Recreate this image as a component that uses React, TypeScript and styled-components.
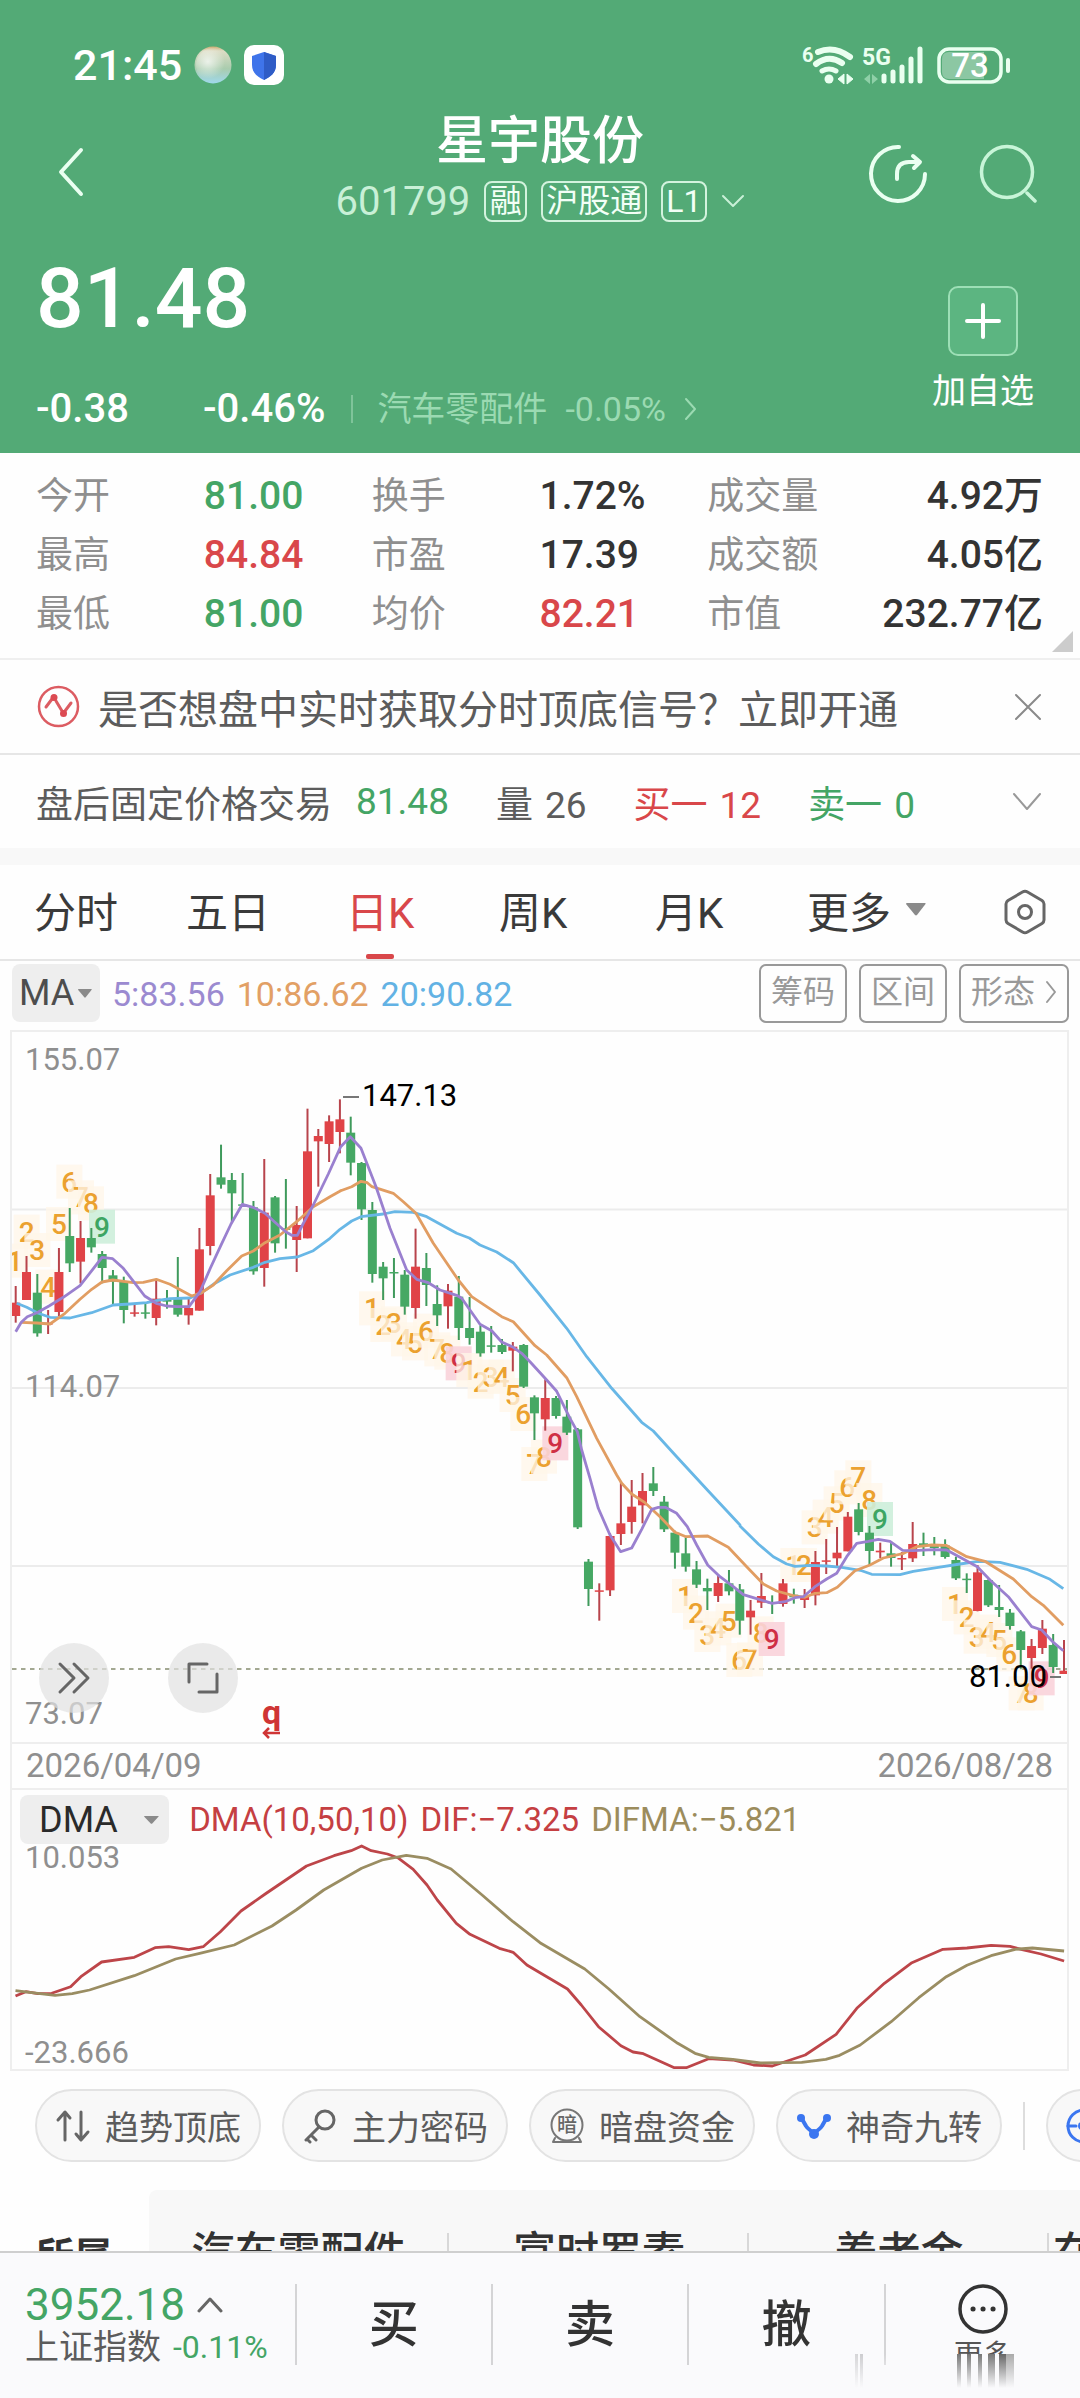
import React from "react";
import styled, { createGlobalStyle } from "styled-components";

const C = {
  green: "#53aa76",
  up: "#d9474a",
  down: "#44a565",
  ink: "#333333",
  text: "#5c5c5c",
  mute: "#8f8f8f",
  line: "#e6e6e6",
};

const Global = createGlobalStyle`
  * { box-sizing: border-box; }
  body { margin: 0; background: #fefefe; }
  body, button, select { font-family: Roboto, "Noto Sans CJK SC", sans-serif; }
  button, select { border: 0; padding: 0; margin: 0; background: none; color: inherit; cursor: pointer; }
  svg { display: block; flex: none; }
`;

const Page = styled.div`
  min-height: 100vh;
  overflow: hidden;
  color: ${C.ink};
  background: #fefefe;
`;

/* ---------- header ---------- */

const Header = styled.header`
  background: ${C.green};
  color: #fff;
  padding-top: 40px;
`;

const StatusBar = styled.div`
  display: flex;
  justify-content: space-between;
  align-items: center;
  height: 50px;
  padding: 0 70px 0 73px;
`;

const StatusGroup = styled.div`
  display: flex;
  align-items: center;
  gap: 12px;
`;

const Clock = styled.time`
  font-size: 43px;
  line-height: 50px;
  font-weight: 500;
`;

const TitleBar = styled.div`
  display: grid;
  grid-template-columns: 1fr auto 1fr;
  align-items: center;
  min-height: 132px;
  margin-top: 18px;
  padding: 0 43px;
`;

const IconButton = styled.button`
  display: inline-flex;
  align-items: center;
  justify-content: center;
`;

const BackSlot = styled.div`
  padding-left: 13px;
`;

const TitleActions = styled.div`
  display: flex;
  justify-content: flex-end;
  gap: 50px;
`;

const TitleBlock = styled.div`
  align-self: start;
  display: flex;
  flex-direction: column;
  align-items: center;
`;

const StockName = styled.h1`
  margin: 0;
  font-size: 52px;
  line-height: 68px;
  font-weight: 500;
`;

const StockMeta = styled.div`
  display: flex;
  align-items: center;
  gap: 14px;
  height: 50px;
  font-size: 40px;
  color: #c9f0d7;
`;

const Badge = styled.span`
  display: inline-flex;
  align-items: center;
  justify-content: center;
  min-width: 43px;
  height: 41px;
  padding: 0 3px;
  border: 2px solid #d3f3de;
  border-radius: 8px;
  color: #f2fff6;
  font-size: 32px;
  line-height: 36px;
`;

const Quote = styled.section`
  display: flex;
  justify-content: space-between;
  padding: 14px 46px 22px 36px;
`;

const Price = styled.div`
  font-size: 84px;
  line-height: 90px;
  font-weight: 500;
`;

const ChangeRow = styled.div`
  display: flex;
  align-items: center;
  margin-top: 43px;
  height: 44px;
  font-size: 40px;
  line-height: 44px;
  font-weight: 500;
`;

const Change = styled.span`
  width: 167px;
`;

const Sector = styled.a`
  display: flex;
  align-items: center;
  gap: 18px;
  margin-left: 26px;
  padding-left: 24px;
  color: #9bdab2;
  font-size: 34px;
  line-height: 28px;
  font-weight: 400;
  border-left: 2px solid #7fc49a;
  text-decoration: none;
`;

const AddButton = styled.button`
  display: flex;
  flex-direction: column;
  align-items: center;
  align-self: flex-start;
  gap: 12px;
  margin-top: 32px;
  font-size: 34px;
  line-height: 46px;
`;

const PlusBox = styled.span`
  display: flex;
  align-items: center;
  justify-content: center;
  width: 70px;
  height: 70px;
  border: 2px solid #9ddfb6;
  border-radius: 10px;
  background: #5cb581;
`;

/* ---------- key figures ---------- */

const Stats = styled.dl`
  position: relative;
  display: grid;
  grid-template-columns: repeat(3, 1fr);
  margin: 0;
  padding: 14px 37px 14px 36px;
  border-bottom: 2px solid #efefef;
`;

const Stat = styled.div<{ $end?: boolean }>`
  display: ${(p) => (p.$end ? "flex" : "grid")};
  grid-template-columns: 1fr 1fr;
  justify-content: space-between;
  height: 59px;
  line-height: 59px;
`;

const StatLabel = styled.dt`
  font-size: 37px;
  color: ${C.mute};
`;

const StatValue = styled.dd<{ $color?: string }>`
  margin: 0;
  font-size: 39px;
  font-weight: 500;
  white-space: nowrap;
  color: ${(p) => p.$color ?? C.ink};
`;

const Corner = styled.span`
  position: absolute;
  right: 7px;
  bottom: 6px;
  border-style: solid;
  border-width: 0 0 21px 21px;
  border-color: transparent transparent #cccccc transparent;
`;

/* ---------- notice rows ---------- */

const Notice = styled.div`
  display: flex;
  align-items: center;
  justify-content: space-between;
  min-height: 95px;
  padding: 0 38px 0 37px;
  border-bottom: 2px solid ${C.line};
  color: ${C.text};
  font-size: 40px;
`;

const NoticeLink = styled.a`
  display: flex;
  align-items: center;
  gap: 18px;
  color: inherit;
  text-decoration: none;
`;

const AfterHours = styled.div`
  display: flex;
  align-items: center;
  min-height: 93px;
  padding: 0 38px 0 36px;
  font-size: 37px;
  color: ${C.text};
`;

const Pair = styled.span<{ $color?: string; $gap?: number }>`
  display: flex;
  align-items: baseline;
  gap: 12px;
  margin-right: ${(p) => p.$gap ?? 47}px;
  color: ${(p) => p.$color ?? C.text};
`;

const Spacer = styled.span`
  flex: 1;
`;

const Band = styled.div`
  height: 17px;
  background: #f8f8f8;
`;

/* ---------- period tabs ---------- */

const Tabs = styled.nav`
  display: grid;
  grid-template-columns: 152fr 160fr 153fr 156fr 152fr 197fr 42fr;
  height: 96px;
  padding: 0 34px;
  border-bottom: 2px solid ${C.line};
`;

const Tab = styled.button<{ $active?: boolean }>`
  position: relative;
  justify-self: start;
  display: flex;
  align-items: center;
  gap: 15px;
  padding-bottom: 6px;
  font-size: 42px;
  white-space: nowrap;
  color: ${(p) => (p.$active ? C.up : "#3a3a3a")};

  &::after {
    content: "";
    display: ${(p) => (p.$active ? "block" : "none")};
    position: absolute;
    left: 50%;
    bottom: 0;
    width: 28px;
    height: 5px;
    margin-left: -14px;
    border-radius: 2px;
    background: ${C.up};
  }
`;

/* ---------- chart toolbar ---------- */

const Toolbar = styled.div`
  display: flex;
  align-items: flex-start;
  gap: 12px;
  padding: 3px 11px 6px 12px;
`;

const Picker = styled.label<{ $wide?: boolean }>`
  position: relative;
  display: flex;
  align-items: center;
  width: ${(p) => (p.$wide ? 149 : 88)}px;
  height: ${(p) => (p.$wide ? 49 : 58)}px;
  border-radius: 8px;
  background: #eeeeee;

  select {
    appearance: none;
    width: 100%;
    height: 100%;
    padding-left: ${(p) => (p.$wide ? 19 : 7)}px;
    font-size: 36px;
    color: ${(p) => (p.$wide ? "#2a2a2a" : "#4d4d4d")};
  }

  svg {
    position: absolute;
    right: ${(p) => (p.$wide ? 10 : 8)}px;
    pointer-events: none;
  }
`;

const Averages = styled.div`
  display: flex;
  gap: 12px;
  font-size: 34px;
  line-height: 60px;
`;

const Tint = styled.span<{ $color: string }>`
  color: ${(p) => p.$color};
`;

const Tool = styled.button`
  display: flex;
  align-items: center;
  gap: 10px;
  height: 59px;
  padding: 0 10px;
  border: 2px solid #999;
  border-radius: 7px;
  color: #999;
  font-size: 32px;
  line-height: 50px;
  padding-bottom: 4px;
`;

/* ---------- charts ---------- */

const Frame = styled.div`
  margin: 0 11px 0 10px;
  border: 2px solid #eeeeee;
`;

const Plot = styled.div`
  position: relative;

  > svg {
    width: 100%;
    height: auto;
  }
`;

const Scale = styled.span<{ $top: string }>`
  position: absolute;
  left: 13px;
  top: ${(p) => p.$top};
  font-size: 31px;
  line-height: 36px;
  margin-top: -18px;
  color: ${C.mute};
`;

const RoundButton = styled.button<{ $left: number }>`
  position: absolute;
  left: ${(p) => p.$left}px;
  bottom: 29px;
  display: flex;
  align-items: center;
  justify-content: center;
  width: 70px;
  height: 70px;
  border-radius: 50%;
  background: rgba(225, 225, 225, 0.7);
`;

const Dates = styled.div`
  display: flex;
  justify-content: space-between;
  height: 48px;
  padding: 0 14px;
  border: solid #eeeeee;
  border-width: 2px 0;
  font-size: 33px;
  line-height: 44px;
  color: ${C.mute};
`;

const IndicatorHead = styled.div`
  display: flex;
  align-items: center;
  gap: 12px;
  padding: 5px 8px 0;
  font-size: 33px;
  line-height: 49px;
`;

/* ---------- chips and concepts ---------- */

const Chips = styled.div`
  display: flex;
  align-items: center;
  gap: 21px;
  padding: 18px 0 28px 35px;
  overflow: hidden;
`;

const Chip = styled.button`
  flex: none;
  display: flex;
  align-items: center;
  gap: 14px;
  height: 73px;
  padding: 0 18px;
  border: 2px solid #e3e3e3;
  border-radius: 37px;
  background: #f8f8f8;
  color: ${C.text};
  font-size: 34px;
`;

const ChipRule = styled.span`
  flex: none;
  width: 2px;
  height: 48px;
  background: #dddddd;
`;

const Concepts = styled.section`
  display: grid;
  grid-template-columns: 149px 1fr;
  height: 132px;
`;

const ConceptTitle = styled.h2`
  margin: 0;
  padding-left: 36px;
  font-size: 38px;
  line-height: 132px;
  font-weight: 700;
`;

const ConceptList = styled.div`
  display: flex;
  align-items: center;
  overflow: hidden;
  border-radius: 8px 0 0 0;
  background: #f8f8f8;
`;

const Concept = styled.a`
  flex: 0 0 300px;
  padding-bottom: 6px;
  text-align: center;
  font-size: 43px;
  line-height: 60px;
  font-weight: 500;
  color: ${C.ink};
  text-decoration: none;
  background: linear-gradient(#d8d8d8, #d8d8d8) right 10px / 2px 100% no-repeat;

  &:last-child {
    text-align: left;
    padding-left: 4px;
  }
`;

/* ---------- trade bar ---------- */

const TradeBar = styled.footer`
  position: fixed;
  left: 0;
  right: 0;
  bottom: 0;
  display: grid;
  grid-template-columns: 3fr 2fr 2fr 2fr 2fr;
  padding: 31px 0 33px;
  border-top: 2px solid #cfcfcf;
  background: #fafafc;
`;

const IndexCell = styled.button`
  padding-left: 25px;
  text-align: left;
  height: 81px;
`;

const IndexLine = styled.span<{ $size: number }>`
  display: flex;
  align-items: center;
  gap: 12px;
  height: 42px;
  font-size: ${(p) => p.$size}px;
  line-height: 42px;
  color: ${C.text};
`;

const IndexChange = styled.span`
  color: ${C.down};
  font-size: 32px;
`;

const TradeCell = styled.button`
  display: flex;
  flex-direction: column;
  align-items: center;
  justify-content: center;
  height: 81px;
  border-left: 2px solid #d4d4d6;
  font-size: 50px;
  line-height: 74px;
  font-weight: 500;
`;

const MoreCell = styled(TradeCell)`
  justify-content: flex-start;
  color: #555;
  font-size: 29px;
  font-weight: 400;
`;

const MoreText = styled.span`
  height: 24px;
  margin-top: 0;
  line-height: 44px;
  overflow: hidden;
`;

const Smear = styled.svg`
  position: absolute;
  right: 5px;
  top: 101px;
  pointer-events: none;
`;

/* ---------- data ---------- */

type Candle = [up: 0 | 1, high: number, top: number, bottom: number, low: number];

// Values are stored in thirds of a chart unit, relative to the base of each block.
const BLOCKS: { base: number; rows: Candle[] }[] = [
  {
    base: 1020,
    rows: [
      [1, 798, 848, 888, 908], [1, 708, 756, 840, 840], [0, 762, 818, 940, 950], [1, 870, 908, 914, 942],
      [1, 684, 756, 876, 888], [0, 564, 648, 730, 756], [1, 603, 654, 725, 790], [0, 624, 654, 682, 698],
      [0, 693, 702, 744, 790], [0, 750, 766, 785, 852], [0, 770, 786, 870, 910], [1, 850, 877, 881, 890],
      [0, 850, 877, 881, 896], [1, 778, 836, 894, 916], [0, 810, 840, 845, 866], [0, 711, 836, 884, 890],
      [1, 836, 864, 886, 914], [1, 624, 688, 872, 872], [1, 462, 526, 678, 706], [0, 374, 472, 494, 506],
      [0, 459, 480, 520, 606], [0, 459, 553, 557, 560], [0, 543, 562, 754, 764], [1, 417, 578, 744, 800],
      [0, 528, 532, 670, 698], [0, 477, 625, 629, 686], [1, 558, 615, 660, 756], [1, 266, 394, 655, 655],
      [1, 327, 348, 364, 500], [1, 286, 304, 372, 426], [1, 238, 298, 336, 400], [0, 290, 338, 428, 466],
    ],
  },
  {
    base: 1060,
    rows: [
      [0, 306, 309, 448, 480], [0, 426, 450, 642, 668], [0, 606, 620, 655, 720], [0, 594, 636, 640, 714],
      [0, 630, 644, 740, 764], [1, 506, 620, 744, 776], [0, 579, 624, 675, 738], [0, 676, 732, 766, 798],
      [1, 672, 692, 739, 806], [0, 648, 710, 804, 840], [0, 711, 804, 834, 854], [0, 796, 815, 880, 890],
      [0, 798, 856, 860, 878], [0, 837, 855, 876, 882], [1, 846, 860, 872, 934], [0, 852, 855, 980, 984],
      [0, 1006, 1012, 1060, 1140], [1, 958, 1014, 1078, 1112], [0, 1008, 1014, 1068, 1076],
      [0, 1020, 1070, 1118, 1125],
    ],
  },
  {
    base: 1300,
    rows: [
      [0, 384, 388, 682, 687], [0, 777, 785, 867, 918], [1, 850, 871, 875, 962], [1, 700, 708, 871, 888],
      [1, 546, 670, 702, 735], [1, 540, 620, 666, 701], [1, 519, 573, 616, 670], [0, 501, 550, 573, 588],
      [0, 588, 605, 688, 696], [0, 692, 698, 758, 806], [0, 712, 760, 800, 815], [0, 783, 808, 854, 864],
      [0, 836, 864, 874, 930], [1, 824, 849, 888, 906], [0, 810, 850, 874, 886], [0, 852, 868, 962, 1004],
      [1, 900, 932, 952, 1004], [1, 819, 888, 908, 924], [0, 886, 906, 910, 942], [1, 837, 850, 912, 920],
      [0, 866, 884, 892, 911], [1, 867, 890, 900, 924],
    ],
  },
  {
    base: 1400,
    rows: [
      [1, 453, 486, 586, 616], [1, 417, 481, 485, 522], [1, 381, 458, 475, 500], [1, 336, 350, 454, 454],
      [0, 309, 328, 396, 406], [0, 378, 398, 453, 496], [1, 428, 452, 457, 474], [0, 424, 460, 474, 500],
      [1, 456, 474, 478, 510], [1, 366, 432, 475, 486], [0, 398, 430, 436, 468], [0, 411, 432, 444, 466],
      [0, 418, 436, 471, 476], [0, 470, 480, 535, 540], [0, 520, 536, 540, 579], [1, 495, 517, 633, 634],
      [0, 538, 540, 616, 621], [0, 555, 621, 630, 651], [0, 627, 638, 678, 689], [0, 690, 694, 750, 806],
      [1, 717, 738, 774, 806], [1, 660, 686, 744, 762], [0, 702, 735, 801, 819], [1, 720, 812, 822, 822],
    ],
  },
];

const candles = BLOCKS.flatMap(({ base, rows }) =>
  rows.map(([up, ...v]) => ({ up, v: v.map((n) => base + n / 3) })),
).map((c, i) => ({ ...c, x: 15.7 + i * 10.807 }));

type Run = [x0: number, y0: number, points: string];

const toPoints = (runs: Run[], xScale = 3) =>
  runs
    .flatMap(([x0, y0, s]) =>
      s.split(" ").map((p) => {
        const [x, y] = p.split(",").map(Number);
        return `${(x0 + x / xScale).toFixed(1)},${(y0 + y / 3).toFixed(1)}`;
      }),
    )
    .join(" ");

const MA5 = toPoints([
  [0, 1020, "47,935 64,907 82,890 111,878 147,858 190,832 240,797 273,755 306,712 338,716 370,745 405,790 434,828 469,850 500,858 531,860 567,860 600,815 631,745 661,680 693,612 727,553 759,562 795,580 824,606 857,635 875,646 892,646 910,610 940,555 985,462 1022,380 1051,350"],
  [340, 1060, "45,245 63,265 108,380 150,505 200,630 230,658 265,668 300,690 350,706 365,715 420,793 455,812 485,846 520,862 545,880 570,905 620,960 650,994 690,1075 712,1115"],
  [480, 1300, "305,450 330,535 355,625 390,705 422,755 455,744 485,688 515,628 535,622 556,622 590,640 622,680 650,735 683,795 720,830 760,860 790,884 820,893 876,910 915,905 945,893"],
  [740, 1400, "190,590 225,560 260,537 290,520 320,470 350,430 385,424 415,418 450,424 488,451 520,452 580,449 620,450 660,472 712,500 750,540 805,590 875,680 905,690 938,725 970,752"],
]);

const MA10 = toPoints([
  [0, 1020, "64,907 111,909 150,912 195,880 240,838 275,808 306,786 338,780 400,788 430,787 469,778 510,793 575,828 605,818 640,795 680,752 725,708 760,693 795,668 840,645 890,605 940,560 990,530 1022,512"],
  [340, 1060, "0,393 35,380 63,364 82,368 96,380 160,400 190,425 228,460 280,550 355,660 395,710 440,740 485,770 520,785 585,857 620,885 680,953 710,1010 770,1135 830,1245"],
  [480, 1300, "425,550 455,582 495,608 540,650 585,697 618,710 683,708 745,742 800,800 850,852 890,873 940,887"],
  [740, 1400, "195,592 225,580 260,578 292,562 345,512 390,495 430,474 488,461 530,440 575,435 618,436 680,470 735,484 820,537 875,590 910,616 970,676"],
]);

const MA20 = toPoints([
  [0, 1020, "50,850 80,862 115,880 150,892 210,894 275,878 340,855 390,852 440,848 469,842 510,836 570,834 605,818 640,793 690,765 760,742 795,727 840,716 892,711 940,692 990,655"],
  [340, 1060, "0,508 35,483 63,470 130,462 165,455 220,457 260,470 350,520 388,534 420,555 470,576 520,608 600,705 680,805 740,890 815,985 905,1087"],
  [480, 1300, "520,393 590,470 685,573 780,675"],
  [740, 1400, "0,378 55,432 100,470 140,492 165,499 210,496 260,498 305,502 365,512 395,523 480,524 520,514 590,503 660,492 715,484 780,487 860,508 930,538 970,566"],
]);

const DIF = toPoints(
  [
    [0, 1600, "45,1188 75,1175 110,1181 150,1180 205,1160 235,1130 295,1086 390,1072 450,1043 490,1040 548,1049 590,1040 640,995 700,933 770,882 890,798 970,767 1020,752 1050,738 1078,752 1125,762 1155,773 1200,808 1240,855 1270,900 1325,970 1365,1003 1450,1045 1490,1057 1530,1095"],
    [540, 1600, "0,1118 80,1167 120,1215 170,1280 235,1337 270,1356 300,1361 390,1403 425,1403 490,1376 560,1380 620,1395 675,1398 770,1365 860,1303 920,1225 1000,1150 1080,1088 1170,1048 1240,1044 1310,1036 1365,1039 1400,1049 1455,1062 1522,1083"],
  ],
  2.904,
);

const DIFMA = toPoints(
  [
    [0, 1600, "45,1172 110,1180 160,1186 210,1181 260,1170 390,1127 510,1077 580,1060 680,1035 790,978 860,930 940,870 1050,805 1110,780 1180,766 1240,775 1310,807 1400,885 1490,965"],
    [540, 1600, "0,1028 130,1107 200,1167 290,1250 400,1330 450,1360 490,1372 560,1378 640,1389 760,1387 830,1378 870,1366 930,1335 1020,1265 1100,1193 1180,1130 1240,1096 1310,1067 1380,1048 1430,1044 1522,1053"],
  ],
  2.904,
);

// Nine-turn counters: each run lists the centres of 1, 2, 3 … in order.
const TURNS: { x0: number; y0: number; last: string; at: string }[] = [
  { x0: 0, y0: 1020, last: "g", at: "45,722 80,635 112,690 145,800 177,612 208,485 243,532 273,550 306,620" },
  { x0: 340, y0: 1060, last: "r", at: "96,745 130,795 162,790 192,838 225,850 258,812 292,868 322,878 356,910" },
  { x0: 340, y0: 1060, last: "r", at: "388,930 422,965 452,950 485,950 518,1005 550,1062 583,1212 612,1190 646,1150" },
  { x0: 480, y0: 1300, last: "r", at: "615,888 648,938 682,1005 715,985 746,962 778,1080 810,1078 842,1000 875,1017" },
  { x0: 740, y0: 1400, last: "g", at: "160,495 192,495 224,382 257,350 290,310 322,262 355,232 388,300 420,357" },
  { x0: 740, y0: 1400, last: "r", at: "645,612 680,652 710,710 745,695 778,720 808,763 845,880 872,880 905,835" },
];

const turns = TURNS.flatMap(({ x0, y0, last, at }) =>
  at.split(" ").map((p, i) => {
    const [x, y] = p.split(",").map(Number);
    const nine = i === 8;
    return {
      n: i + 1,
      x: x0 + x / 3,
      y: y0 + y / 3,
      nine,
      ink: nine ? (last === "g" ? "#3da563" : "#cf2f45") : "#eba12f",
      back: nine ? (last === "g" ? "#cdeeda" : "#f9d3da") : "#fff6e8",
    };
  }),
);

const STATS: [string, string, string?][] = [
  ["今开", "81.00", C.down], ["换手", "1.72%"], ["成交量", "4.92万"],
  ["最高", "84.84", C.up], ["市盈", "17.39"], ["成交额", "4.05亿"],
  ["最低", "81.00", C.down], ["均价", "82.21", C.up], ["市值", "232.77亿"],
];

/* ---------- drawings ---------- */

const Chevron = ({ d, w, h, color, stroke = 3 }: { d: string; w: number; h: number; color: string; stroke?: number }) => (
  <svg width={w} height={h} viewBox={`0 0 ${w} ${h}`} fill="none" stroke={color} strokeWidth={stroke} strokeLinecap="round" strokeLinejoin="round">
    <path d={d} />
  </svg>
);

const Caret = ({ w, h }: { w: number; h: number }) => (
  <svg width={w} height={h} viewBox="0 0 20 14" preserveAspectRatio="none">
    <path d="M0 1Q0 0 1 0H19Q20 0 19.500 1L11 13Q10 14 9 13Z" fill="#8a8a8a" />
  </svg>
);

const AppBall = () => (
  <svg width="38" height="40" viewBox="0 0 38 40">
    <defs>
      <linearGradient id="ball" x1="0" y1="0" x2="0" y2="1">
        <stop offset="0" stopColor="#cfae74" />
        <stop offset=".12" stopColor="#dcdcc4" />
        <stop offset=".6" stopColor="#a9ccae" />
        <stop offset="1" stopColor="#9fd8ec" />
      </linearGradient>
      <radialGradient id="shine" cx=".35" cy=".4" r=".5">
        <stop offset="0" stopColor="#fff" stopOpacity=".7" />
        <stop offset="1" stopColor="#fff" stopOpacity="0" />
      </radialGradient>
    </defs>
    <circle cx="19" cy="20" r="18.500" fill="url(#ball)" />
    <circle cx="19" cy="20" r="17" fill="url(#shine)" />
  </svg>
);

const ShieldApp = () => (
  <svg width="40" height="40" viewBox="0 0 40 40">
    <rect width="40" height="40" rx="10" fill="#fff" />
    <path d="M20 7L32 11V20C32 28 26 32 20 35C14 32 8 28 8 20V11Z" fill="#3f74ea" />
    <path d="M20 7L32 11V20C32 28 26 32 20 35Z" fill="#2f5cc6" />
  </svg>
);

const Signals = () => (
  <svg width="208" height="42" viewBox="802 44 208 42" fill="none" stroke="#eafff0">
    <text x="802" y="62" fontSize="20" fontWeight="700" fill="#eafff0" stroke="none">6</text>
    <path d="M818 52Q834 45 850 57" strokeWidth="6" strokeLinecap="round" />
    <path d="M816 64Q829 54 842 63" strokeWidth="6" strokeLinecap="round" />
    <path d="M822 71Q829 67 836 71" strokeWidth="5" strokeLinecap="round" />
    <circle cx="829" cy="79" r="4.500" fill="#eafff0" stroke="none" />
    <path d="M838 79L844 74V84ZM853 79L847 74V84Z" fill="#eafff0" strokeWidth="1" />
    <text x="862" y="65" fontSize="23" fontWeight="700" fill="#eafff0" stroke="none">5G</text>
    <path d="M864 79L870 74V84ZM878 79L872 74V84Z" fill="#8fd0a8" stroke="none" />
    <path d="M884 76V81M893 72V81M902 67V81M911 59V81M920 49V81" strokeWidth="5" strokeLinecap="round" />
    <rect x="939" y="49" width="62" height="33" rx="10" strokeWidth="3.500" />
    <path d="M949 52H984V79H949Q942 79 942 72V59Q942 52 949 52Z" fill="#8cc7a3" stroke="none" />
    <path d="M1008 60V71" strokeWidth="4" strokeLinecap="round" />
    <text x="970" y="77" fontSize="33" fontWeight="500" textAnchor="middle" fill="#fff" stroke="none">73</text>
  </svg>
);

const ShareIcon = () => (
  <svg width="62" height="62" viewBox="0 0 62 62" fill="none" stroke="#eafff1" strokeWidth="4" strokeLinecap="round" strokeLinejoin="round">
    <path d="M32 4A27 27 0 1 0 58 31" />
    <path d="M30 36V31Q30 19 42 19H52M46 13L53 19L47 25" />
  </svg>
);

const SearchIcon = () => (
  <svg width="58" height="60" viewBox="0 0 58 60" fill="none" stroke="#c8f5d8" strokeWidth="3.500" strokeLinecap="round">
    <circle cx="28" cy="28" r="25.500" />
    <path d="M48 49L56 57" />
  </svg>
);

const SignalIcon = () => (
  <svg width="43" height="43" viewBox="0 0 43 43" fill="none" stroke="#dc5c62" strokeWidth="2.500" strokeLinecap="round">
    <circle cx="21.500" cy="21.500" r="19.500" />
    <path d="M9 22L15 14M19 16L25 26M28 26L34 18" strokeWidth="3" />
    <circle cx="17" cy="12.500" r="3.500" fill="#dc4a52" stroke="none" />
    <circle cx="26.500" cy="28.500" r="3.500" fill="#dc4a52" stroke="none" />
  </svg>
);

const HexIcon = () => (
  <svg width="42" height="46" viewBox="0 0 42 46" fill="none" stroke="#666" strokeWidth="3" strokeLinejoin="round">
    <path d="M18.500 3Q21 1.500 23.500 3L38 11.500Q40 13 40 15V31Q40 33 38 34.500L23.500 43Q21 44.500 18.500 43L4 34.500Q2 33 2 31V15Q2 13 4 11.500Z" />
    <circle cx="21" cy="23" r="6.500" />
  </svg>
);

const chipSvg = { width: 36, height: 36, viewBox: "0 0 36 36", fill: "none", strokeLinecap: "round", strokeLinejoin: "round" } as const;

const TrendIcon = () => (
  <svg {...chipSvg} stroke="#666" strokeWidth="3">
    <path d="M10 32V5M3 12L10 4L15 10M26 4V31M33 24L26 32L21 26" />
  </svg>
);
const KeyIcon = () => (
  <svg {...chipSvg} stroke="#666" strokeWidth="3">
    <circle cx="23" cy="12" r="9" />
    <path d="M17 19L4 32M9 27L14 32M5 31L8 34" />
  </svg>
);
const DarkIcon = () => (
  <svg {...chipSvg} stroke="#777" strokeWidth="2">
    <circle cx="18" cy="17" r="15.500" />
    <path d="M4 34H32M6 30L4 34M30 30L32 34" />
    <text x="18" y="24" fontSize="20" textAnchor="middle" fill="#666" stroke="none" fontWeight="500">暗</text>
  </svg>
);
const NineIcon = () => (
  <svg {...chipSvg} stroke="#3b76f0" strokeWidth="4">
    <path d="M6 11L10 18Q12 21 18 25Q24 21 26 18L30 11" />
    <circle cx="5" cy="10" r="4" fill="#3b76f0" stroke="none" />
    <circle cx="31" cy="10" r="4" fill="#3b76f0" stroke="none" />
    <circle cx="18" cy="26" r="5" fill="#3b76f0" stroke="none" />
  </svg>
);
const OrbitIcon = () => (
  <svg {...chipSvg} stroke="#3b76f0" strokeWidth="3">
    <circle cx="18" cy="18" r="16" />
    <path d="M2 18H10M26 18H34" />
    <circle cx="16" cy="18" r="4" fill="#3b76f0" stroke="none" />
  </svg>
);

const KLine = () => (
  <svg viewBox="12 1032 1055 710" role="img" aria-label="日K线图">
    <path d="M12 1209.500H1067M12 1388H1067M12 1566H1067" stroke="#ececec" strokeWidth="2" />
    <path d="M12 1669H1067" stroke="#a3a892" strokeWidth="2" strokeDasharray="4.500 4.500" />
    {turns.map((t, i) => (
      <g key={i}>
        <rect x={t.x - 13} y={t.y - 17} width="26" height="34" fill={t.back} opacity={t.nine ? 0.9 : 0.76} />
        <text x={t.x} y={t.y + 10} fontSize="28" textAnchor="middle" fill={t.ink} fontWeight="500">{t.n}</text>
      </g>
    ))}
    {candles.map(({ up, v, x }, i) => {
      const color = up ? "#e04347" : "#46a864";
      return (
        <g key={i}>
          <path d={`M${x} ${v[0]}V${v[3]}`} stroke={up ? "#b8444c" : "#3f9a5c"} strokeWidth="2" />
          <rect x={x - 4.5} y={v[1]} width="9" height={Math.max(v[2] - v[1], 1.5)} fill={color} />
        </g>
      );
    })}
    <g fill="none" strokeWidth="2.800" strokeLinejoin="round">
      <polyline points={MA20} stroke="#68b7e6" />
      <polyline points={MA10} stroke="#e19d62" />
      <polyline points={MA5} stroke="#9a80cf" />
    </g>
    <path d="M343 1097H359M1050 1677H1061" stroke="#777" strokeWidth="2" />
    <g fontSize="31" fill="#000">
      <text x="362" y="1106">147.13</text>
      <text x="969" y="1687">81.00</text>
    </g>
    <text x="262" y="1724" fontSize="34" fontWeight="700" fill="#cf3535">q</text>
    <path d="M280 1733H264M269 1728L264 1733L269 1738" stroke="#cf3535" strokeWidth="2.500" fill="none" />
  </svg>
);

const STREAKS: [x: number, w: number, color: string][] = [
  [855, 3, "#d5d5d7"], [860, 3, "#cdcdd0"], [957, 4, "#777"], [967, 4, "#777"], [978, 4, "#777"],
  [988, 7, "#777"], [999, 7, "#666"], [1006, 8, "#aaa"],
];

export default function App() {
  return (
    <Page>
      <Global />
      <Header>
        <StatusBar>
          <StatusGroup>
            <Clock>21:45</Clock>
            <AppBall />
            <ShieldApp />
          </StatusGroup>
          <Signals />
        </StatusBar>

        <TitleBar>
          <BackSlot>
            <IconButton aria-label="返回">
              <Chevron d="M25 3L5 25L25 47" w={30} h={50} color="#eafff1" stroke={4} />
            </IconButton>
          </BackSlot>
          <TitleBlock>
            <StockName>星宇股份</StockName>
            <StockMeta>
              601799
              <Badge>融</Badge>
              <Badge>沪股通</Badge>
              <Badge>L1</Badge>
              <Chevron d="M2 2L12 12L22 2" w={24} h={14} color="#c9f0d7" stroke={2} />
            </StockMeta>
          </TitleBlock>
          <TitleActions>
            <IconButton aria-label="分享"><ShareIcon /></IconButton>
            <IconButton aria-label="搜索"><SearchIcon /></IconButton>
          </TitleActions>
        </TitleBar>

        <Quote>
          <div>
            <Price>81.48</Price>
            <ChangeRow>
              <Change>-0.38</Change>
              <span>-0.46%</span>
              <Sector href="#sector">
                汽车零配件 <span>-0.05%</span>
                <Chevron d="M2 2L11 12L2 22" w={13} h={24} color="#9bdab2" stroke={2} />
              </Sector>
            </ChangeRow>
          </div>
          <AddButton>
            <PlusBox>
              <Chevron d="M18 2V34M2 18H34" w={36} h={36} color="#fff" stroke={4} />
            </PlusBox>
            加自选
          </AddButton>
        </Quote>
      </Header>

      <Stats>
        {STATS.map(([label, value, color], i) => (
          <Stat key={label} $end={i % 3 === 2}>
            <StatLabel>{label}</StatLabel>
            <StatValue $color={color}>{value}</StatValue>
          </Stat>
        ))}
        <Corner />
      </Stats>

      <Notice>
        <NoticeLink href="#signal">
          <SignalIcon />
          是否想盘中实时获取分时顶底信号？立即开通
        </NoticeLink>
        <IconButton aria-label="关闭">
          <Chevron d="M2 2L26 26M26 2L2 26" w={28} h={28} color="#8a8a8a" stroke={2} />
        </IconButton>
      </Notice>

      <AfterHours>
        <Pair $gap={24}>盘后固定价格交易</Pair>
        <Pair $color={C.down}>81.48</Pair>
        <Pair>量 <span>26</span></Pair>
        <Pair $color={C.up}>买一 <span>12</span></Pair>
        <Pair $color={C.down}>卖一 <span>0</span></Pair>
        <Spacer />
        <IconButton aria-label="展开">
          <Chevron d="M2 2L15 17L28 2" w={30} h={19} color="#999" stroke={2} />
        </IconButton>
      </AfterHours>

      <Band />

      <Tabs>
        <Tab>分时</Tab>
        <Tab>五日</Tab>
        <Tab $active aria-current="true">日K</Tab>
        <Tab>周K</Tab>
        <Tab>月K</Tab>
        <Tab aria-haspopup="menu">更多 <Caret w={20} h={13} /></Tab>
        <IconButton aria-label="设置"><HexIcon /></IconButton>
      </Tabs>

      <Toolbar>
        <Picker>
          <select aria-label="主图指标"><option>MA</option></select>
          <Caret w={14} h={9} />
        </Picker>
        <Averages>
          <Tint $color="#9b8ad0">5:83.56</Tint>
          <Tint $color="#e2a065">10:86.62</Tint>
          <Tint $color="#62b2e4">20:90.82</Tint>
        </Averages>
        <Spacer />
        <Tool>筹码</Tool>
        <Tool>区间</Tool>
        <Tool>
          形态
          <Chevron d="M2 2L10 12L2 22" w={12} h={24} color="#999" stroke={2} />
        </Tool>
      </Toolbar>

      <Frame>
        <Plot>
          <KLine />
          <Scale $top="4%">155.07</Scale>
          <Scale $top="50%">114.07</Scale>
          <Scale $top="96%">73.07</Scale>
          <RoundButton $left={27} aria-label="快进">
            <Chevron d="M4 3L18 17L4 31M18 3L32 17L18 31" w={36} h={34} color="#666" />
          </RoundButton>
          <RoundButton $left={156} aria-label="全屏">
            <Chevron d="M2 20V2H20M30 12V30H12" w={32} h={32} color="#666" />
          </RoundButton>
        </Plot>
        <Dates>
          <time>2026/04/09</time>
          <time>2026/08/28</time>
        </Dates>
        <IndicatorHead>
          <Picker $wide>
            <select aria-label="副图指标"><option>DMA</option></select>
            <Caret w={15} h={8} />
          </Picker>
          <Tint $color="#c53f42">&nbsp;DMA(10,50,10)</Tint>
          <Tint $color="#c53f42">DIF:−7.325</Tint>
          <Tint $color="#9c8c5c">DIFMA:−5.821</Tint>
        </IndicatorHead>
        <Plot>
          <svg viewBox="12 1844 1055 225" role="img" aria-label="DMA">
            <g fill="none" strokeWidth="2.800" strokeLinejoin="round">
              <polyline points={DIF} stroke="#bd4549" />
              <polyline points={DIFMA} stroke="#9a8d62" />
            </g>
          </svg>
          <Scale $top="6%">10.053</Scale>
          <Scale $top="93%">-23.666</Scale>
        </Plot>
      </Frame>

      <Chips>
        <Chip><TrendIcon />趋势顶底</Chip>
        <Chip><KeyIcon />主力密码</Chip>
        <Chip><DarkIcon />暗盘资金</Chip>
        <Chip><NineIcon />神奇九转</Chip>
        <ChipRule />
        <Chip aria-label="指标"><OrbitIcon /></Chip>
      </Chips>

      <Concepts>
        <ConceptTitle>所属</ConceptTitle>
        <ConceptList>
          <Concept href="#c1">汽车零配件</Concept>
          <Concept href="#c2">富时罗素</Concept>
          <Concept href="#c3">养老金</Concept>
          <Concept href="#c4">在</Concept>
        </ConceptList>
      </Concepts>

      <TradeBar>
        <IndexCell>
          <IndexLine $size={44}>
            <Tint $color={C.down}>3952.18</Tint>
            <Chevron d="M2 14L13 2L24 14" w={26} h={16} color="#666" />
          </IndexLine>
          <IndexLine $size={34}>
            上证指数 <IndexChange>-0.11%</IndexChange>
          </IndexLine>
        </IndexCell>
        <TradeCell>买</TradeCell>
        <TradeCell>卖</TradeCell>
        <TradeCell>撤</TradeCell>
        <MoreCell>
          <svg width="50" height="50" viewBox="0 0 50 50">
            <circle cx="25" cy="25" r="23" fill="none" stroke="#333" strokeWidth="3.500" />
            <path d="M15 25h.1M25 25h.1M35 25h.1" stroke="#333" strokeWidth="5" strokeLinecap="round" />
          </svg>
          <MoreText>更多</MoreText>
        </MoreCell>
        <Smear width="235" height="34" viewBox="840 2354 235 34" aria-hidden="true">
          <defs>
            <linearGradient id="fade" x1="0" y1="0" x2="0" y2="1">
              <stop offset="0" stopColor="#fafafc" stopOpacity="0" />
              <stop offset="1" stopColor="#fafafc" />
            </linearGradient>
          </defs>
          <rect x="950" y="2354" width="70" height="34" fill="#fafafc" />
          {STREAKS.map(([x, w, color]) => (
            <rect key={x} x={x} y="2354" width={w} height="34" fill={color} />
          ))}
          <rect x="840" y="2354" width="235" height="34" fill="url(#fade)" />
        </Smear>
      </TradeBar>
    </Page>
  );
}
